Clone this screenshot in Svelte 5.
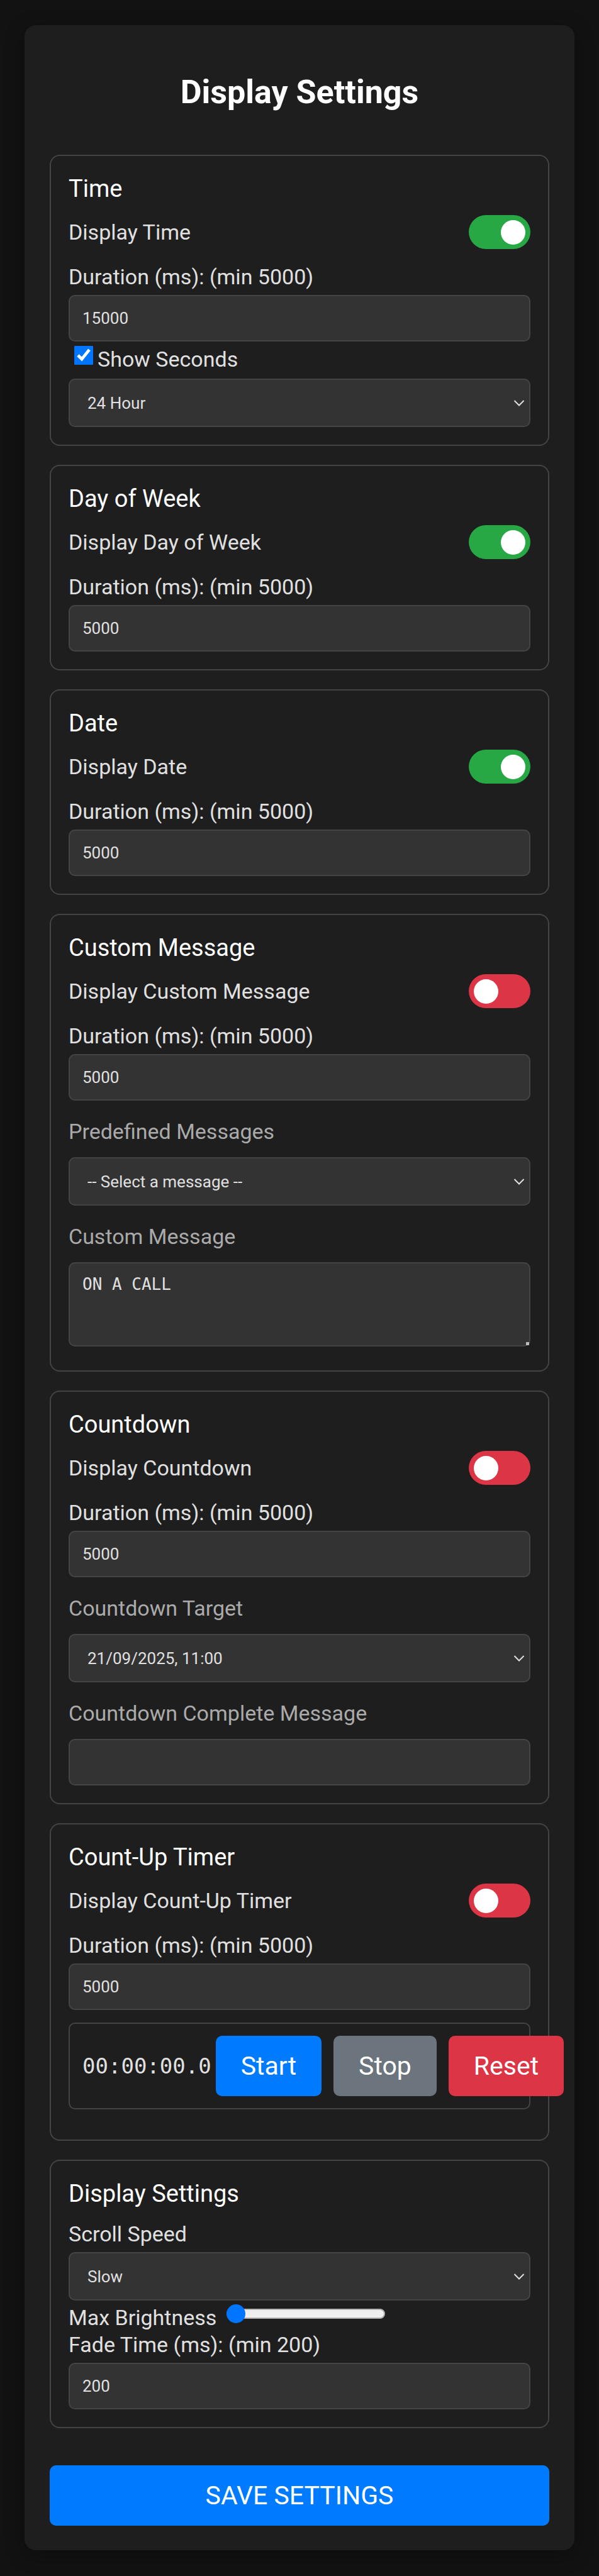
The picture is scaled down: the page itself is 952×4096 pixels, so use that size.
<script>
  let form = $state({
    time: { on: true, duration: 15000, seconds: true, format: '24' },
    day: { on: true, duration: 5000 },
    date: { on: true, duration: 5000 },
    message: { on: false, duration: 5000, preset: '', text: 'ON A CALL' },
    countdown: { on: false, duration: 5000, target: 'a', done: '' },
    timer: { on: false, duration: 5000 },
    display: { speed: 'slow', brightness: 0, fade: 200 }
  });
</script>

{#snippet common(id, name, item)}
  <div class="row">
    <label for="{id}-on">Display {name}</label>
    <input id="{id}-on" class="switch" type="checkbox" role="switch" bind:checked={item.on} />
  </div>
  <label class="label" for="{id}-duration">Duration (ms): (min 5000)</label>
  <input id="{id}-duration" class="field" type="number" min="5000" bind:value={item.duration} />
{/snippet}

{#snippet chevron()}
  <svg class="chevron" viewBox="0 0 18 10" aria-hidden="true">
    <path d="M1.5 1 L9 8.500 L16.500 1" fill="none" stroke="currentColor" stroke-width="2" />
  </svg>
{/snippet}

<main>
  <h1>Display Settings</h1>
  <form onsubmit={(e) => e.preventDefault()}>
    <section>
      <h2>Time</h2>
      {@render common('time', 'Time', form.time)}
      <div class="check">
        <input id="seconds" type="checkbox" bind:checked={form.time.seconds} />
        <label for="seconds">Show Seconds</label>
      </div>
      <div class="select">
        <select class="field" aria-label="Time format" bind:value={form.time.format}>
          <option value="24">24 Hour</option>
        </select>
        {@render chevron()}
      </div>
    </section>

    <section>
      <h2>Day of Week</h2>
      {@render common('day', 'Day of Week', form.day)}
    </section>

    <section>
      <h2>Date</h2>
      {@render common('date', 'Date', form.date)}
    </section>

    <section>
      <h2>Custom Message</h2>
      {@render common('message', 'Custom Message', form.message)}
      <label class="label muted" for="preset">Predefined Messages</label>
      <div class="select">
        <select id="preset" class="field" bind:value={form.message.preset}>
          <option value="">-- Select a message --</option>
        </select>
        {@render chevron()}
      </div>
      <label class="label muted" for="text">Custom Message</label>
      <textarea id="text" class="field" bind:value={form.message.text}></textarea>
    </section>

    <section>
      <h2>Countdown</h2>
      {@render common('countdown', 'Countdown', form.countdown)}
      <label class="label muted" for="target">Countdown Target</label>
      <div class="select">
        <select id="target" class="field" bind:value={form.countdown.target}>
          <option value="a">21/09/2025, 11:00</option>
        </select>
        {@render chevron()}
      </div>
      <label class="label muted" for="done">Countdown Complete Message</label>
      <input id="done" class="field" type="text" bind:value={form.countdown.done} />
    </section>

    <section>
      <h2>Count-Up Timer</h2>
      {@render common('timer', 'Count-Up Timer', form.timer)}
      <div class="timer">
        <output>00:00:00.0</output>
        <div class="actions">
          <button type="button">Start</button>
          <button type="button" class="stop">Stop</button>
          <button type="button" class="reset">Reset</button>
        </div>
      </div>
    </section>

    <section>
      <h2>Display Settings</h2>
      <label class="label" for="speed">Scroll Speed</label>
      <div class="select">
        <select id="speed" class="field" bind:value={form.display.speed}>
          <option value="slow">Slow</option>
        </select>
        {@render chevron()}
      </div>
      <div class="range">
        <label for="brightness">Max Brightness</label>
        <input id="brightness" type="range" min="0" max="15" bind:value={form.display.brightness} />
      </div>
      <label class="label" for="fade">Fade Time (ms): (min 200)</label>
      <input id="fade" class="field" type="number" min="200" bind:value={form.display.fade} />
    </section>

    <button class="save" type="submit">SAVE SETTINGS</button>
  </form>
</main>

<style>
  :global(body) {
    margin: 0;
    background: #121212;
  }
  main {
    margin: 40px 39px;
    padding: 40px 40px 39px;
    box-sizing: border-box;
    border-radius: 18px;
    background: #1e1e1e;
    box-shadow: 0 8px 32px rgba(0, 0, 0, 0.3);
    color: #e0e0e0;
    font-family: Roboto, sans-serif;
    font-size: 34px;
    line-height: 42px;
  }
  :global(#app) {
    display: flow-root;
  }
  h1 {
    margin: 36px 0 68px;
    color: #fff;
    font-size: 52px;
    font-weight: 700;
    line-height: 62px;
    text-align: center;
  }
  form {
    display: flex;
    flex-direction: column;
    gap: 30px;
  }
  section {
    padding: 28px;
    border: 2px solid #444;
    border-radius: 16px;
  }
  h2 {
    margin: 0 0 18px;
    color: #fff;
    font-size: 38px;
    font-weight: 400;
    line-height: 48px;
  }
  .row {
    display: flex;
    align-items: center;
    justify-content: space-between;
    margin-bottom: 22px;
  }
  .switch {
    appearance: none;
    display: flex;
    width: 98px;
    height: 54px;
    margin: 0;
    padding: 8px;
    box-sizing: border-box;
    align-items: center;
    border-radius: 27px;
    background: #dc3545;
  }
  .switch::before {
    content: '';
    width: 39px;
    height: 39px;
    border-radius: 50%;
    background: #fff;
  }
  .switch:checked {
    justify-content: flex-end;
    background: #28a745;
  }
  .label {
    display: block;
    margin-bottom: 7px;
    line-height: 44px;
  }
  .muted {
    margin: 27px 0 19px;
    color: #aaa;
  }
  .field {
    appearance: none;
    display: block;
    width: 100%;
    height: 74px;
    margin: 0;
    padding: 0 20px;
    box-sizing: border-box;
    border: 2px solid #444;
    border-radius: 10px;
    background: #333;
    color: #e0e0e0;
    font-family: inherit;
    font-size: 26px;
    line-height: 30px;
  }
  .field[type='number'] {
    appearance: textfield;
  }
  textarea.field {
    height: 134px;
    margin-bottom: 10px;
    padding: 18px 20px;
    font-family: 'DejaVu Sans Mono', monospace;
  }
  textarea::-webkit-resizer {
    background: linear-gradient(#bbb, #bbb) right bottom / 5px 5px no-repeat;
  }
  .select {
    display: grid;
    align-items: center;
  }
  .select > :global(*) {
    grid-area: 1 / 1;
  }
  select.field {
    height: 77px;
    padding: 0 28px;
  }
  .chevron {
    justify-self: end;
    width: 18px;
    height: 10px;
    margin-right: 9px;
    pointer-events: none;
  }
  .check {
    display: flex;
    align-items: flex-start;
    gap: 7px;
    padding: 7px 0 10px 9px;
  }
  .check input {
    width: 30px;
    height: 30px;
    margin: 0;
    accent-color: #0075ff;
  }
  .timer {
    display: flex;
    align-items: center;
    gap: 7px;
    margin: 20px 0;
    padding: 19px 20px;
    border: 2px solid #444;
    border-radius: 10px;
  }
  output {
    font-family: 'DejaVu Sans Mono', monospace;
    font-size: 34px;
  }
  .actions {
    display: flex;
    gap: 19px;
  }
  button {
    padding: 24px 40px;
    border: 0;
    border-radius: 10px;
    background: #007bff;
    color: #fff;
    font-family: inherit;
    font-size: 41px;
    line-height: 48px;
  }
  .stop {
    background: #6c757d;
  }
  .reset {
    background: #dc3545;
  }
  .range {
    display: flex;
    align-items: flex-start;
    gap: 16px;
    padding-top: 6px;
  }
  .range input {
    appearance: none;
    width: 252px;
    height: 30px;
    margin: 0;
    background: none;
  }
  .range input::-webkit-slider-runnable-track {
    height: 16px;
    box-sizing: border-box;
    border: 2px solid #b2b2b2;
    border-radius: 8px;
    background: #efefef;
  }
  .range input::-webkit-slider-thumb {
    appearance: none;
    width: 30px;
    height: 30px;
    margin: -9px 0 0 -2px;
    border-radius: 50%;
    background: #0075ff;
  }
  .save {
    margin-top: 29px;
  }
</style>
